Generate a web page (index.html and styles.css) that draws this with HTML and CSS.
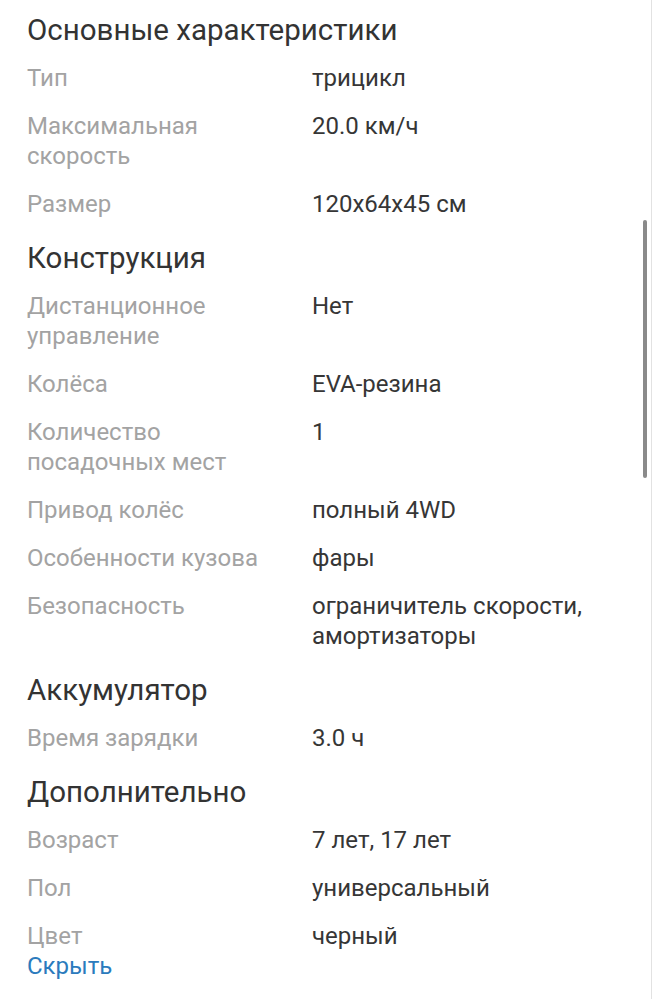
FILE: index.html
```html
<!DOCTYPE html>
<html lang="ru">
<head>
<meta charset="utf-8">
<title>Характеристики</title>
<link rel="stylesheet" href="styles.css">
</head>
<body>
<main class="specs">
  <section class="group">
    <h2 class="group-title">Основные характеристики</h2>
    <dl class="rows">
      <dt>Тип</dt><dd>трицикл</dd>
      <dt>Максимальная скорость</dt><dd>20.0 км/ч</dd>
      <dt>Размер</dt><dd>120x64x45 см</dd>
    </dl>
  </section>
  <section class="group">
    <h2 class="group-title">Конструкция</h2>
    <dl class="rows">
      <dt>Дистанционное управление</dt><dd>Нет</dd>
      <dt>Колёса</dt><dd>EVA-резина</dd>
      <dt>Количество посадочных мест</dt><dd>1</dd>
      <dt>Привод колёс</dt><dd>полный 4WD</dd>
      <dt>Особенности кузова</dt><dd>фары</dd>
      <dt>Безопасность</dt><dd>ограничитель скорости, амортизаторы</dd>
    </dl>
  </section>
  <section class="group">
    <h2 class="group-title">Аккумулятор</h2>
    <dl class="rows">
      <dt>Время зарядки</dt><dd>3.0 ч</dd>
    </dl>
  </section>
  <section class="group">
    <h2 class="group-title">Дополнительно</h2>
    <dl class="rows">
      <dt>Возраст</dt><dd>7 лет, 17 лет</dd>
      <dt>Пол</dt><dd>универсальный</dd>
      <dt>Цвет</dt><dd>черный</dd>
    </dl>
  </section>
  <a class="toggle" href="#">Скрыть</a>
</main>
<div class="scroll-thumb"></div>
<div class="edge"></div>
</body>
</html>
```
FILE: styles.css
```css
html, body {
  margin: 0;
  padding: 0;
  background: #ffffff;
}
body {
  font-family: Roboto, "Noto Sans", Arial, sans-serif;
  color: #333333;
  width: 652px;
  height: 999px;
  overflow: hidden;
  position: relative;
}
.specs {
  padding: 12px 26px 0 27px;
  display: flex;
  flex-direction: column;
}
.group {
  margin-bottom: 21px;
}
.group:last-of-type {
  margin-bottom: 0;
}
.group-title {
  margin: 0 0 15px;
  font-size: 29.5px;
  line-height: 36px;
  font-weight: 400;
  color: #333333;
}
.rows {
  margin: 0;
  display: grid;
  grid-template-columns: 258px 1fr;
  column-gap: 27px;
  row-gap: 18px;
  font-size: 24px;
  line-height: 30px;
}
.rows dt {
  color: #a3a3a3;
}
.rows dd {
  margin: 0;
  color: #363636;
}
.toggle {
  font-size: 24px;
  line-height: 30px;
  color: #2b7bbd;
  text-decoration: none;
  align-self: flex-start;
}
.scroll-thumb {
  position: absolute;
  left: 643px;
  top: 220px;
  width: 4px;
  height: 258px;
  border-radius: 2px;
  background: #8a8a8a;
}
.edge {
  position: absolute;
  right: 0;
  top: 0;
  width: 1px;
  height: 999px;
  background: #e2e2e2;
}
```
